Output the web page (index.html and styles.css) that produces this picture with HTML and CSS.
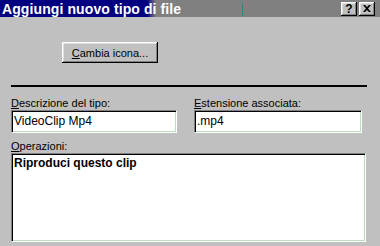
FILE: index.html
```html
<!DOCTYPE html>
<html lang="it">
<head>
  <meta charset="UTF-8" />
  <title>Aggiungi nuovo tipo di file</title>
  <link rel="stylesheet" href="styles.css">
</head>
<body>
  <div class="title-bar">
    <span class="title-text">Aggiungi nuovo tipo di file</span>
    <span class="dots"></span>
    <div class="title-buttons">
      <button class="cap-btn">?</button>
      <button class="cap-btn">
        <svg width="8" height="7" viewBox="0 0 8 7"><path d="M0 0h2l2 2 2-2h2L5 3.5 8 7H6L4 5 2 7H0l3-3.5z" fill="#000"/></svg>
      </button>
    </div>
  </div>

  <div class="panel">
    <div class="icon-row">
      <button class="btn"><u>C</u>ambia icona...</button>
    </div>
    <div class="rule"></div>

    <div class="fields">
      <div class="field left">
        <label><u>D</u>escrizione del tipo:</label>
        <div class="edit">VideoClip Mp4</div>
      </div>
      <div class="field right">
        <label><u>E</u>stensione associata:</label>
        <div class="edit">.mp4</div>
      </div>
    </div>

    <label class="ops-label"><u>O</u>perazioni:</label>
    <div class="edit list">
      <div class="item">Riproduci questo clip</div>
    </div>
  </div>
</body>
</html>
```

FILE: styles.css
```css
body {
  margin: 0;
  background: #c0c0c0;
  font-family: "Liberation Sans", Arial, sans-serif;
  font-size: 11px;
  color: #000;
  width: 380px;
  height: 246px;
  overflow: hidden;
}

.title-bar {
  position: relative;
  height: 17px;
  display: flex;
  align-items: center;
  background: linear-gradient(to right, #000080 0, #000080 147px, #808080 156px, #808080 100%);
}

.title-text {
  color: #fff;
  font-weight: bold;
  font-size: 14px;
  padding-left: 2px;
  letter-spacing: 0.1px;
}

.dots {
  position: absolute;
  left: 242px;
  top: 3px;
  height: 13px;
  border-left: 1px dotted #008080;
}

.title-buttons {
  margin-left: auto;
  margin-right: 5px;
  display: flex;
  gap: 2px;
}

.cap-btn {
  width: 16px;
  height: 14px;
  padding: 0;
  background: #c0c0c0;
  border: none;
  box-shadow: inset -1px -1px #000, inset 1px 1px #fff, inset -2px -2px #808080, inset 2px 2px #dfdfdf;
  font-family: "Liberation Sans", Arial, sans-serif;
  font-weight: bold;
  font-size: 12px;
  line-height: 14px;
  display: flex;
  align-items: center;
  justify-content: center;
}

.panel {
  padding: 0 13px 0 11px;
}

.icon-row {
  padding: 25px 0 0 51px;
}

.btn {
  width: 96px;
  height: 21px;
  padding: 0;
  background: #c0c0c0;
  border: none;
  box-shadow: inset -1px -1px #000, inset 1px 1px #fff, inset -2px -2px #808080, inset 2px 2px #dfdfdf;
  font-family: "Liberation Sans", Arial, sans-serif;
  font-size: 11px;
  color: #000;
}

.rule {
  height: 2px;
  background: #000;
  margin-top: 22px;
}

.fields {
  display: flex;
  gap: 17px;
  margin-top: 10px;
}

.field {
  display: flex;
  flex-direction: column;
}

.field.left {
  width: 166px;
}

.field.right {
  width: 168px;
}

label {
  display: block;
  height: 13px;
  line-height: 13px;
}

.edit {
  height: 23px;
  box-sizing: border-box;
  background: #fff;
  border-top: 1px solid #808080;
  border-left: 1px solid #808080;
  border-right: 1px solid #fff;
  border-bottom: 1px solid #fff;
  box-shadow: inset 1px 1px #000, inset -1px -1px #c0dcc0;
  padding: 3px 3px 0 2px;
  font-size: 12px;
  line-height: 15px;
  white-space: nowrap;
}

.ops-label {
  margin-top: 7px;
}

.list {
  width: 355px;
  height: 89px;
  padding: 2px 2px;
}

.item {
  font-weight: bold;
  font-size: 12px;
  line-height: 14px;
}
```
